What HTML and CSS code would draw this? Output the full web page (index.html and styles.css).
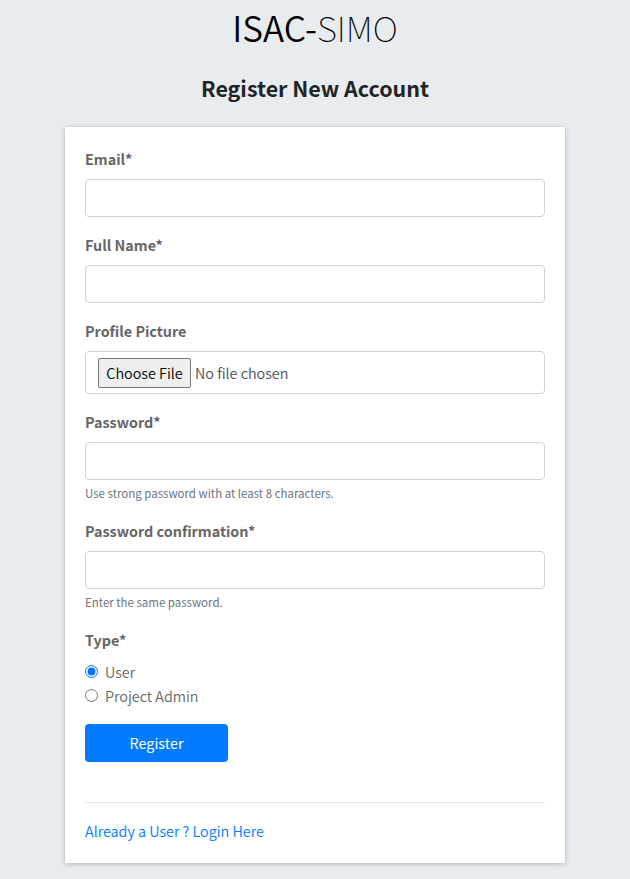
FILE: index.html
```html
<!DOCTYPE html>
<html lang="en">
<head>
<meta charset="utf-8">
<title>Register</title>
<link rel="stylesheet" href="styles.css">
</head>
<body>
<main class="register-box">
  <div class="logo">ISAC-<span class="logo-thin">SIMO</span></div>
  <h1>Register New Account</h1>
  <form class="card">
    <div class="group"><label for="email">Email*</label><input class="control" id="email" type="text"></div>
    <div class="group"><label for="name">Full Name*</label><input class="control" id="name" type="text"></div>
    <div class="group"><label>Profile Picture</label>
      <div class="control file"><button type="button" class="choose">Choose File</button><span class="none">No file chosen</span></div></div>
    <div class="group"><label for="p1">Password*</label><input class="control" id="p1" type="password"><small>Use strong password with at least 8 characters.</small></div>
    <div class="group"><label for="p2">Password confirmation*</label><input class="control" id="p2" type="password"><small>Enter the same password.</small></div>
    <div class="group"><label>Type*</label>
      <div class="option"><input type="radio" name="type" checked><span>User</span></div>
      <div class="option"><input type="radio" name="type"><span>Project Admin</span></div></div>
    <button type="button" class="submit">Register</button>
    <hr>
    <a class="login">Already a User ? Login Here</a>
  </form>
</main>
</body>
</html>
```
FILE: styles.css
```css
* { box-sizing: border-box; }
body { margin: 0; height: 879px; overflow: hidden; background: #e8ecef; color: #212529; font: 350 14.36px/24px "Noto Sans CJK SC", sans-serif; }
.register-box { width: 500px; margin: 0 auto; white-space: nowrap; }
.logo { height: 60px; text-align: center; color: #000; font-size: 35px; line-height: 54px; }
.logo-thin { font-weight: 100; }
h1 { margin: 13px 0 24px; text-align: center; font-size: 21.45px; line-height: 30px; font-weight: 700; }
.card { height: 736px; padding: 20px; background: #fff; color: #666; box-shadow: 0 0 1px rgba(0,0,0,.13), 0 1px 5px rgba(0,0,0,.22); }
.group { margin-bottom: 16px; }
label { display: block; height: 24px; margin-bottom: 8px; font-weight: 700; }
.control { display: block; width: 100%; height: 38px; border: 1px solid #ced4da; border-radius: 4px; background: #fff; }
.file { display: flex; align-items: center; height: 43px; padding-left: 12px; }
.choose { width: 93px; height: 30px; padding: 0; border: 1px solid #767676; border-radius: 2px; background: #efefef; color: #000; font: inherit; }
.none { margin-left: 4px; color: #495057; }
small { display: block; margin-top: 4px; height: 19px; line-height: 19px; font-size: 11.48px; font-weight: 400; color: #6c757d; }
.option { display: flex; align-items: center; height: 24px; }
.option input { width: 13px; height: 13px; margin: 0 7px 2px 0; }
.submit { display: block; width: 143px; height: 38px; border: 0; border-radius: 4px; background: #007bff; color: #fff; font: inherit; font-weight: 400; }
hr { height: 1px; margin: 40px 0 16px; border: 0; background: #e5e5e5; }
.login { color: #007bff; }
```
